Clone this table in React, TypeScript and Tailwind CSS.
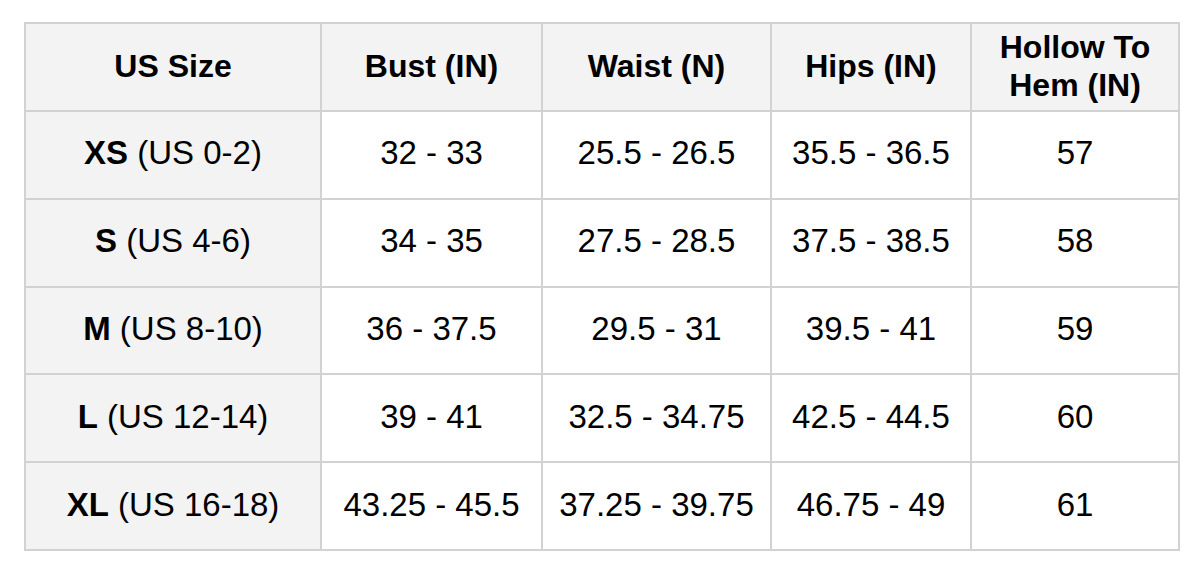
const headers = ['US Size', 'Bust (IN)', 'Waist (N)', 'Hips (IN)', 'Hollow To Hem (IN)']

const rows = [
  { size: 'XS', us: '(US 0-2)', bust: '32 - 33', waist: '25.5 - 26.5', hips: '35.5 - 36.5', hem: '57' },
  { size: 'S', us: '(US 4-6)', bust: '34 - 35', waist: '27.5 - 28.5', hips: '37.5 - 38.5', hem: '58' },
  { size: 'M', us: '(US 8-10)', bust: '36 - 37.5', waist: '29.5 - 31', hips: '39.5 - 41', hem: '59' },
  { size: 'L', us: '(US 12-14)', bust: '39 - 41', waist: '32.5 - 34.75', hips: '42.5 - 44.5', hem: '60' },
  { size: 'XL', us: '(US 16-18)', bust: '43.25 - 45.5', waist: '37.25 - 39.75', hips: '46.75 - 49', hem: '61' },
]

const cell = 'border-2 border-[#d2d2d2] text-center leading-[38px] align-middle pb-[3px]'

export default function App() {
  return (
    <div className="w-[1201px] h-[572px] bg-white pt-[22px] pl-[24px] font-['Liberation_Sans',Arial,sans-serif] text-black">
      <table className="table-fixed border-collapse border-2 border-[#d2d2d2] w-[1154px]">
        <colgroup>
          <col className="w-[296px]" />
          <col className="w-[221px]" />
          <col className="w-[229px]" />
          <col className="w-[200px]" />
          <col className="w-[208px]" />
        </colgroup>
        <thead>
          <tr className="h-[88px] bg-[#f3f3f3]">
            {headers.map((h) => (
              <th key={h} className={`${cell} px-2 text-[32px] font-bold`}>
                {h}
              </th>
            ))}
          </tr>
        </thead>
        <tbody className="text-[33px]">
          {rows.map((r) => (
            <tr key={r.size} className="h-[87.8px]">
              <td className={`${cell} bg-[#f3f3f3]`}>
                <span className="font-bold">{r.size}</span> {r.us}
              </td>
              <td className={cell}>{r.bust}</td>
              <td className={cell}>{r.waist}</td>
              <td className={cell}>{r.hips}</td>
              <td className={cell}>{r.hem}</td>
            </tr>
          ))}
        </tbody>
      </table>
    </div>
  )
}
